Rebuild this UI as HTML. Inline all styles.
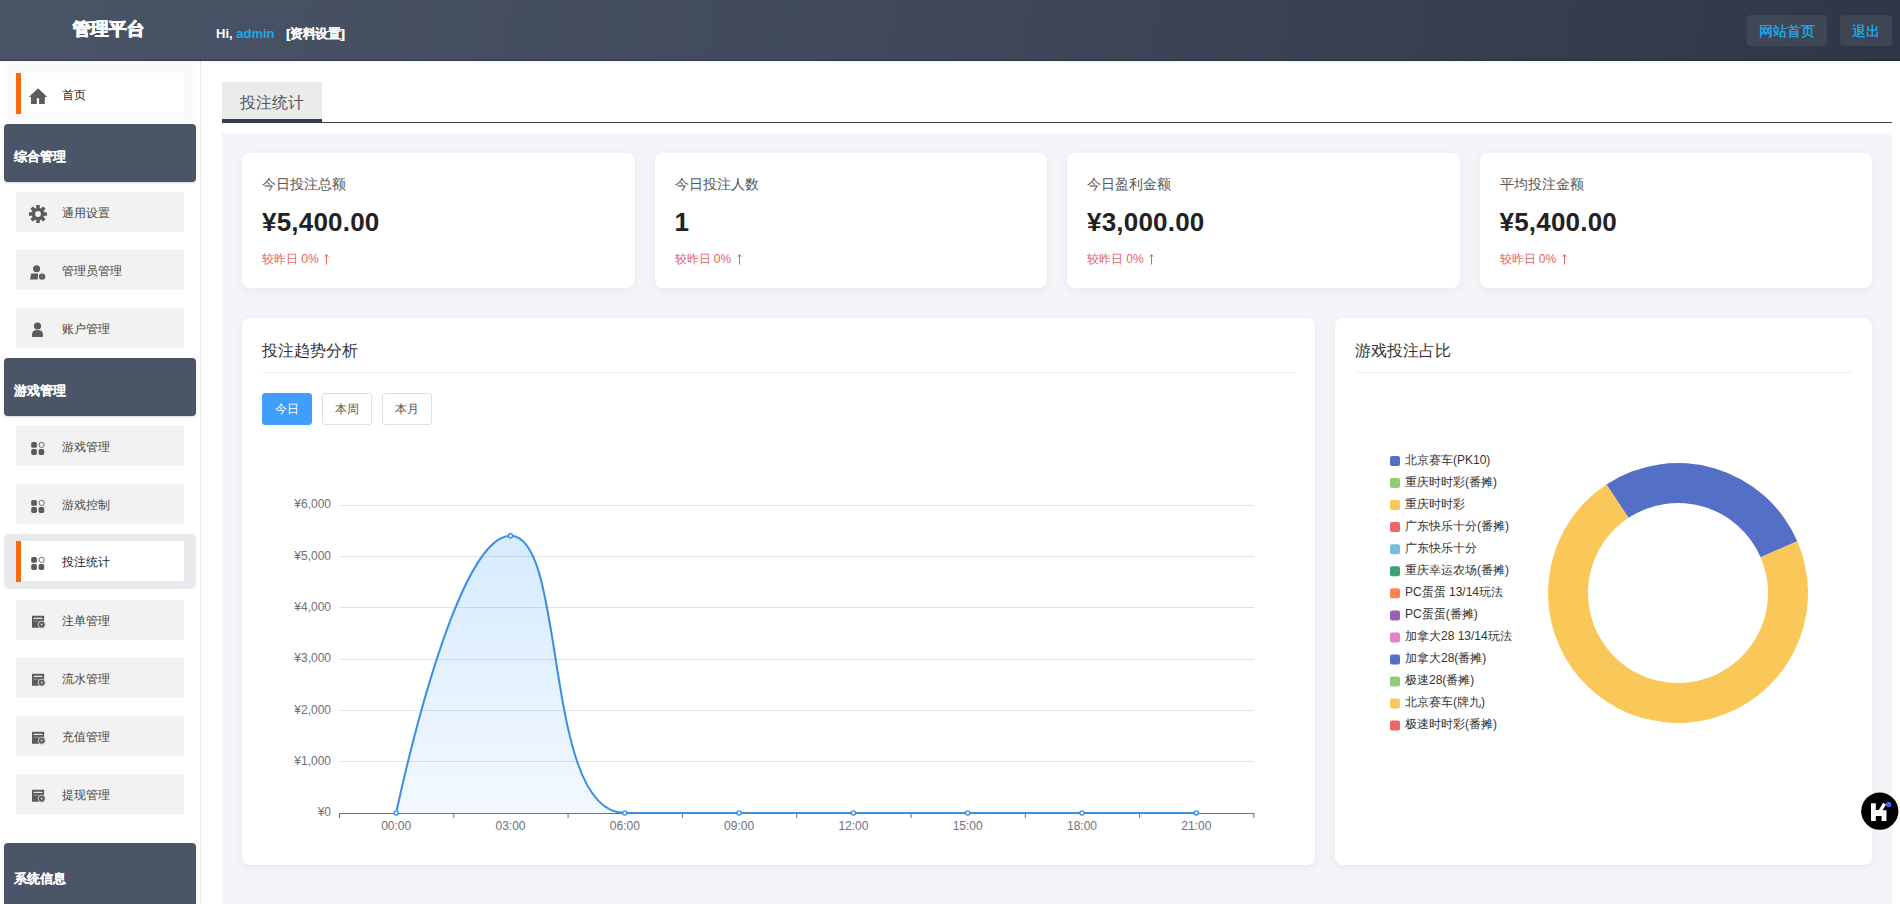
<!DOCTYPE html>
<html><head><meta charset="utf-8"><style>
*{box-sizing:border-box;margin:0;padding:0}
html,body{width:1900px;height:904px;overflow:hidden;background:#fff;font-family:"Liberation Sans",sans-serif;color:#333}
.abs{position:absolute}
.b{text-shadow:0.3px 0 0 currentColor}
#hdr{z-index:2;left:0;top:0;width:1900px;height:61px;background:linear-gradient(100deg,#4a5467 0%,#404a5c 45%,#2f3747 100%);box-shadow:inset 0 -1.5px 0 rgba(0,0,0,.18),0 1px 3px rgba(0,0,0,.07)}
#logo{z-index:3;left:72.5px;top:19px;text-shadow:0.5px 0 0 #fff,-0.2px 0 0 #fff;font-size:18px;font-weight:bold;color:#fff;line-height:20px;white-space:nowrap}
#hi{z-index:3;left:216px;top:26px;font-size:13px;font-weight:bold;color:#fff;white-space:nowrap;line-height:16px}
#hi .u{color:#1ea7ee}
.hbtn{z-index:3;top:15px;height:31px;line-height:33px;font-size:14px;color:#1ba8e8;text-shadow:0.3px 0 0 currentColor;background:rgba(255,255,255,.07);border-radius:4px;text-align:center}
#side{left:0;top:61px;width:201px;height:843px;background:#fff;border-right:1px solid #e9e9ec}
.item{position:absolute;left:16px;width:168px;height:40px;background:#f2f2f2;font-size:12px;color:#454545;line-height:16px}
.item .t{position:absolute;left:46px;top:13px;white-space:nowrap}
.item .ic{position:absolute;left:0;top:0;width:40px;height:40px;overflow:visible}
.grp{position:absolute;left:4px;width:192px;height:58px;background:#4b5568;border-radius:4px;box-shadow:0 1px 2px rgba(0,0,0,.15)}
.grp span{position:absolute;left:10px;top:25px;color:#fff;font-weight:bold;font-size:13px;line-height:16px;white-space:nowrap}
.bar{position:absolute;left:0;top:0;width:5px;height:41px;background:#f96a0a}
.card{position:absolute;background:#fff;border-radius:8px;box-shadow:0 2px 10px rgba(0,0,0,.06)}
.lbl{position:absolute;left:20px;top:23px;font-size:14px;color:#555;white-space:nowrap;line-height:16px}
.val{position:absolute;left:20px;top:56px;font-size:26px;font-weight:bold;color:#222;letter-spacing:0.2px;white-space:nowrap;line-height:26px}
.cmp{position:absolute;left:20px;top:99px;font-size:12px;color:#df6464;white-space:nowrap;line-height:14px}
.ttl{position:absolute;left:20px;top:24px;font-size:16px;color:#333;white-space:nowrap;line-height:18px}
.div{position:absolute;left:20px;top:54px;height:1px;background:#eef0f3}
.btn{position:absolute;top:75px;width:50px;height:32px;border:1px solid #dcdfe6;border-radius:3px;font-size:12px;color:#555;text-align:center;line-height:30px;background:#fff}
.btn.on{background:#409eff;border-color:#409eff;color:#fff}
svg text{font-family:"Liberation Sans",sans-serif}
</style></head><body>
<div id="hdr" class="abs"></div>
<div id="logo" class="abs">管理平台</div>
<div id="hi" class="abs">Hi, <span class="u">admin</span></div><div class="abs b" style="z-index:3;left:286px;top:26px;font-size:13px;font-weight:bold;color:#fff;line-height:16px;white-space:nowrap;letter-spacing:-0.4px">[资料设置]</div>
<div class="abs hbtn" style="left:1747px;width:80px">网站首页</div>
<div class="abs hbtn" style="left:1840px;width:52px">退出</div>
<div id="side" class="abs">
<div class="abs" style="left:4px;top:3px;width:192px;height:56px;background:#fafafa"></div>
<div class="item" style="top:12px;background:#fff;color:#222"><div class="bar"></div><svg class="ic" width="40" height="40"><path d="M22.1 15.2 L31.2 23.9 L28.8 23.9 L28.8 30.9 L23.1 30.9 L23.1 25.2 L20.8 25.2 L20.8 30.9 L15 30.9 L15 23.9 L12.9 23.9 Z" fill="#5b5b5b"/></svg><span class="t" style="top:14px">首页</span></div>
<div class="grp" style="top:63px"><span class="b">综合管理</span></div>
<div class="item" style="top:131px"><svg class="ic" width="40" height="40"><g fill="#5b5b5b" transform="translate(22,22)"><circle r="6.3"/><rect x="-1.8" y="-9" width="3.6" height="18" rx="0.5"/><rect x="-1.8" y="-9" width="3.6" height="18" rx="0.5" transform="rotate(45)"/><rect x="-1.8" y="-9" width="3.6" height="18" rx="0.5" transform="rotate(90)"/><rect x="-1.8" y="-9" width="3.6" height="18" rx="0.5" transform="rotate(135)"/></g><circle cx="22" cy="22" r="2.9" fill="#f2f2f2"/></svg><span class="t">通用设置</span></div>
<div class="item" style="top:189px"><svg class="ic" width="40" height="40"><g fill="#5b5b5b"><circle cx="20.6" cy="18.7" r="3.5"/><path d="M15.2 23.6 L22.2 23.6 L21.7 29.6 L14 29.6 Z"/><circle cx="26.1" cy="26.6" r="3.2"/></g><circle cx="26.1" cy="26.6" r="1" fill="#888"/></svg><span class="t">管理员管理</span></div>
<div class="item" style="top:247px"><svg class="ic" width="40" height="40"><g fill="#5b5b5b"><circle cx="21.5" cy="18" r="3.6"/><path d="M16.1 29 L16.1 26 Q16.1 21.9 21.5 21.9 Q26.9 21.9 26.9 26 L26.9 29 Z"/></g></svg><span class="t">账户管理</span></div>
<div class="grp" style="top:297px"><span class="b">游戏管理</span></div>
<div class="item" style="top:365px"><svg class="ic" width="40" height="40"><g fill="#5b5b5b"><rect x="15.2" y="16" width="5.7" height="5.8" rx="1.6"/><rect x="15.2" y="23.1" width="5.7" height="5.8" rx="1.6"/><rect x="22.6" y="23.1" width="5.6" height="5.8" rx="1.6"/></g><circle cx="25.6" cy="18.9" r="2.6" fill="none" stroke="#5b5b5b" stroke-width="0.9"/></svg><span class="t">游戏管理</span></div>
<div class="item" style="top:423px"><svg class="ic" width="40" height="40"><g fill="#5b5b5b"><rect x="15.2" y="16" width="5.7" height="5.8" rx="1.6"/><rect x="15.2" y="23.1" width="5.7" height="5.8" rx="1.6"/><rect x="22.6" y="23.1" width="5.6" height="5.8" rx="1.6"/></g><circle cx="25.6" cy="18.9" r="2.6" fill="none" stroke="#5b5b5b" stroke-width="0.9"/></svg><span class="t">游戏控制</span></div>
<div class="abs" style="left:4px;top:473px;width:192px;height:55px;background:#e8e9ec;border-radius:5px"></div>
<div class="item" style="top:480px;background:#fff;color:#222"><div class="bar"></div><svg class="ic" width="40" height="40"><g fill="#5b5b5b"><rect x="15.2" y="16" width="5.7" height="5.8" rx="1.6"/><rect x="15.2" y="23.1" width="5.7" height="5.8" rx="1.6"/><rect x="22.6" y="23.1" width="5.6" height="5.8" rx="1.6"/></g><circle cx="25.6" cy="18.9" r="2.6" fill="none" stroke="#5b5b5b" stroke-width="0.9"/></svg><span class="t">投注统计</span></div>
<div class="item" style="top:539px"><svg class="ic" width="40" height="40"><rect x="16" y="15.8" width="12.1" height="12" rx="0.5" fill="#5b5b5b"/><rect x="17.5" y="17.8" width="9" height="1.2" rx="0.6" fill="#e8e8e8"/><rect x="17.5" y="20.6" width="5" height="1" fill="#9a9a9a"/><circle cx="25.7" cy="24.6" r="3.6" fill="#5b5b5b" stroke="#dcdcdc" stroke-width="0.9"/><path d="M24.4 23.8 L27 23.8 L25.7 26 Z" fill="#dcdcdc"/></svg><span class="t">注单管理</span></div>
<div class="item" style="top:597px"><svg class="ic" width="40" height="40"><rect x="16" y="15.8" width="12.1" height="12" rx="0.5" fill="#5b5b5b"/><rect x="17.5" y="17.8" width="9" height="1.2" rx="0.6" fill="#e8e8e8"/><rect x="17.5" y="20.6" width="5" height="1" fill="#9a9a9a"/><circle cx="25.7" cy="24.6" r="3.6" fill="#5b5b5b" stroke="#dcdcdc" stroke-width="0.9"/><path d="M24.4 23.8 L27 23.8 L25.7 26 Z" fill="#dcdcdc"/></svg><span class="t">流水管理</span></div>
<div class="item" style="top:655px"><svg class="ic" width="40" height="40"><rect x="16" y="15.8" width="12.1" height="12" rx="0.5" fill="#5b5b5b"/><rect x="17.5" y="17.8" width="9" height="1.2" rx="0.6" fill="#e8e8e8"/><rect x="17.5" y="20.6" width="5" height="1" fill="#9a9a9a"/><circle cx="25.7" cy="24.6" r="3.6" fill="#5b5b5b" stroke="#dcdcdc" stroke-width="0.9"/><path d="M24.4 23.8 L27 23.8 L25.7 26 Z" fill="#dcdcdc"/></svg><span class="t">充值管理</span></div>
<div class="item" style="top:713px"><svg class="ic" width="40" height="40"><rect x="16" y="15.8" width="12.1" height="12" rx="0.5" fill="#5b5b5b"/><rect x="17.5" y="17.8" width="9" height="1.2" rx="0.6" fill="#e8e8e8"/><rect x="17.5" y="20.6" width="5" height="1" fill="#9a9a9a"/><circle cx="25.7" cy="24.6" r="3.6" fill="#5b5b5b" stroke="#dcdcdc" stroke-width="0.9"/><path d="M24.4 23.8 L27 23.8 L25.7 26 Z" fill="#dcdcdc"/></svg><span class="t">提现管理</span></div>
<div class="grp" style="top:782px;height:70px"><span class="b" style="top:28px">系统信息</span></div>
</div>
<div class="abs" style="left:222px;top:82px;width:100px;height:37px;background:#ebebeb"></div>
<div class="abs" style="left:240px;top:94px;font-size:16px;color:#555;line-height:18px">投注统计</div>
<div class="abs" style="left:222px;top:122px;width:1670px;height:1px;background:#3a3f4c"></div>
<div class="abs" style="left:222px;top:119px;width:100px;height:4px;background:#363c50"></div>
<div class="abs" style="left:222px;top:133px;width:1670px;height:771px;background:#f4f5f8"></div>
<div class="card" style="left:242.0px;top:153px;width:392.5px;height:135px"><div class="lbl">今日投注总额</div><div class="val">¥5,400.00</div><div class="cmp">较昨日 0% <svg style="position:absolute;left:61px;top:2px" width="7" height="11"><path d="M3.5 0.5 L3.5 10.5 M1.6 2.8 L3.5 0.7 L5.4 2.8" stroke="#df6464" stroke-width="1" fill="none"/></svg></div></div>
<div class="card" style="left:654.5px;top:153px;width:392.5px;height:135px"><div class="lbl">今日投注人数</div><div class="val">1</div><div class="cmp">较昨日 0% <svg style="position:absolute;left:61px;top:2px" width="7" height="11"><path d="M3.5 0.5 L3.5 10.5 M1.6 2.8 L3.5 0.7 L5.4 2.8" stroke="#df6464" stroke-width="1" fill="none"/></svg></div></div>
<div class="card" style="left:1067.0px;top:153px;width:392.5px;height:135px"><div class="lbl">今日盈利金额</div><div class="val">¥3,000.00</div><div class="cmp">较昨日 0% <svg style="position:absolute;left:61px;top:2px" width="7" height="11"><path d="M3.5 0.5 L3.5 10.5 M1.6 2.8 L3.5 0.7 L5.4 2.8" stroke="#df6464" stroke-width="1" fill="none"/></svg></div></div>
<div class="card" style="left:1479.5px;top:153px;width:392.5px;height:135px"><div class="lbl">平均投注金额</div><div class="val">¥5,400.00</div><div class="cmp">较昨日 0% <svg style="position:absolute;left:61px;top:2px" width="7" height="11"><path d="M3.5 0.5 L3.5 10.5 M1.6 2.8 L3.5 0.7 L5.4 2.8" stroke="#df6464" stroke-width="1" fill="none"/></svg></div></div>
<div class="card" style="left:242px;top:318px;width:1073.33px;height:547px"><div class="ttl">投注趋势分析</div><div class="div" style="width:1033px"></div><div class="btn on" style="left:20px">今日</div><div class="btn" style="left:80px">本周</div><div class="btn" style="left:140px">本月</div></div>
<div class="card" style="left:1335.33px;top:318px;width:536.67px;height:547px"><div class="ttl">游戏投注占比</div><div class="div" style="width:497px"></div></div>
<svg class="abs" style="left:0;top:0" width="1900" height="904" viewBox="0 0 1900 904">
<defs><linearGradient id="ag" x1="0" y1="0" x2="0" y2="1"><stop offset="0" stop-color="#409eff" stop-opacity="0.21"/><stop offset="1" stop-color="#409eff" stop-opacity="0.07"/></linearGradient></defs>
<text x="331" y="816.2" font-size="12" fill="#6e7079" text-anchor="end">¥0</text>
<line x1="339.5" y1="761.5" x2="1254" y2="761.5" stroke="#e2e2e6" stroke-width="1"/>
<text x="331" y="764.9" font-size="12" fill="#6e7079" text-anchor="end">¥1,000</text>
<line x1="339.5" y1="710.5" x2="1254" y2="710.5" stroke="#e2e2e6" stroke-width="1"/>
<text x="331" y="713.5" font-size="12" fill="#6e7079" text-anchor="end">¥2,000</text>
<line x1="339.5" y1="659.5" x2="1254" y2="659.5" stroke="#e2e2e6" stroke-width="1"/>
<text x="331" y="662.2" font-size="12" fill="#6e7079" text-anchor="end">¥3,000</text>
<line x1="339.5" y1="607.5" x2="1254" y2="607.5" stroke="#e2e2e6" stroke-width="1"/>
<text x="331" y="610.9" font-size="12" fill="#6e7079" text-anchor="end">¥4,000</text>
<line x1="339.5" y1="556.5" x2="1254" y2="556.5" stroke="#e2e2e6" stroke-width="1"/>
<text x="331" y="559.5" font-size="12" fill="#6e7079" text-anchor="end">¥5,000</text>
<line x1="339.5" y1="505.5" x2="1254" y2="505.5" stroke="#e2e2e6" stroke-width="1"/>
<text x="331" y="508.2" font-size="12" fill="#6e7079" text-anchor="end">¥6,000</text>
<path d="M396.20,813.00 C396.20,813.00 453.35,535.80 510.50,535.80 C567.65,535.80 542.05,813.00 624.80,813.00 C656.35,813.00 681.95,813.00 739.10,813.00 C796.25,813.00 796.25,813.00 853.40,813.00 C910.55,813.00 910.55,813.00 967.70,813.00 C1024.85,813.00 1024.85,813.00 1082.00,813.00 C1139.15,813.00 1196.30,813.00 1196.30,813.00 L1196.3,813.0 L396.2,813.0 Z" fill="url(#ag)"/>
<line x1="339.5" y1="813.5" x2="1254" y2="813.5" stroke="#6e7079" stroke-width="1"/>
<line x1="339.5" y1="813" x2="339.5" y2="818" stroke="#6e7079" stroke-width="1"/>
<line x1="453.8" y1="813" x2="453.8" y2="818" stroke="#6e7079" stroke-width="1"/>
<line x1="568.1" y1="813" x2="568.1" y2="818" stroke="#6e7079" stroke-width="1"/>
<line x1="682.4" y1="813" x2="682.4" y2="818" stroke="#6e7079" stroke-width="1"/>
<line x1="796.7" y1="813" x2="796.7" y2="818" stroke="#6e7079" stroke-width="1"/>
<line x1="911.0" y1="813" x2="911.0" y2="818" stroke="#6e7079" stroke-width="1"/>
<line x1="1025.3" y1="813" x2="1025.3" y2="818" stroke="#6e7079" stroke-width="1"/>
<line x1="1139.6" y1="813" x2="1139.6" y2="818" stroke="#6e7079" stroke-width="1"/>
<line x1="1253.9" y1="813" x2="1253.9" y2="818" stroke="#6e7079" stroke-width="1"/>
<text x="396.2" y="830" font-size="12" fill="#6e7079" text-anchor="middle">00:00</text>
<text x="510.5" y="830" font-size="12" fill="#6e7079" text-anchor="middle">03:00</text>
<text x="624.8" y="830" font-size="12" fill="#6e7079" text-anchor="middle">06:00</text>
<text x="739.1" y="830" font-size="12" fill="#6e7079" text-anchor="middle">09:00</text>
<text x="853.4" y="830" font-size="12" fill="#6e7079" text-anchor="middle">12:00</text>
<text x="967.7" y="830" font-size="12" fill="#6e7079" text-anchor="middle">15:00</text>
<text x="1082.0" y="830" font-size="12" fill="#6e7079" text-anchor="middle">18:00</text>
<text x="1196.3" y="830" font-size="12" fill="#6e7079" text-anchor="middle">21:00</text>
<path d="M396.20,813.00 C396.20,813.00 453.35,535.80 510.50,535.80 C567.65,535.80 542.05,813.00 624.80,813.00 C656.35,813.00 681.95,813.00 739.10,813.00 C796.25,813.00 796.25,813.00 853.40,813.00 C910.55,813.00 910.55,813.00 967.70,813.00 C1024.85,813.00 1024.85,813.00 1082.00,813.00 C1139.15,813.00 1196.30,813.00 1196.30,813.00" fill="none" stroke="#3a8ee6" stroke-width="2"/>
<circle cx="396.2" cy="813.0" r="2.1" fill="#fff" stroke="#3a8ee6" stroke-width="1.4"/>
<circle cx="510.5" cy="535.8" r="2.1" fill="#fff" stroke="#3a8ee6" stroke-width="1.4"/>
<circle cx="624.8" cy="813.0" r="2.1" fill="#fff" stroke="#3a8ee6" stroke-width="1.4"/>
<circle cx="739.1" cy="813.0" r="2.1" fill="#fff" stroke="#3a8ee6" stroke-width="1.4"/>
<circle cx="853.4" cy="813.0" r="2.1" fill="#fff" stroke="#3a8ee6" stroke-width="1.4"/>
<circle cx="967.7" cy="813.0" r="2.1" fill="#fff" stroke="#3a8ee6" stroke-width="1.4"/>
<circle cx="1082.0" cy="813.0" r="2.1" fill="#fff" stroke="#3a8ee6" stroke-width="1.4"/>
<circle cx="1196.3" cy="813.0" r="2.1" fill="#fff" stroke="#3a8ee6" stroke-width="1.4"/>
<path d="M1606.44,484.47 A130,130 0 0 1 1797.31,541.37 L1760.60,557.26 A90,90 0 0 0 1628.46,517.86 Z" fill="#5470c6"/>
<path d="M1797.31,541.37 A130,130 0 1 1 1606.44,484.47 L1628.46,517.86 A90,90 0 1 0 1760.60,557.26 Z" fill="#fac858"/>
<rect x="1390" y="456.0" width="10" height="10" rx="2" fill="#5470c6"/>
<text x="1405" y="463.7" font-size="12" fill="#333">北京赛车(PK10)</text>
<rect x="1390" y="478.1" width="10" height="10" rx="2" fill="#91cc75"/>
<text x="1405" y="485.8" font-size="12" fill="#333">重庆时时彩(番摊)</text>
<rect x="1390" y="500.1" width="10" height="10" rx="2" fill="#fac858"/>
<text x="1405" y="507.8" font-size="12" fill="#333">重庆时时彩</text>
<rect x="1390" y="522.1" width="10" height="10" rx="2" fill="#ee6666"/>
<text x="1405" y="529.9" font-size="12" fill="#333">广东快乐十分(番摊)</text>
<rect x="1390" y="544.2" width="10" height="10" rx="2" fill="#73c0de"/>
<text x="1405" y="551.9" font-size="12" fill="#333">广东快乐十分</text>
<rect x="1390" y="566.2" width="10" height="10" rx="2" fill="#3ba272"/>
<text x="1405" y="574.0" font-size="12" fill="#333">重庆幸运农场(番摊)</text>
<rect x="1390" y="588.3" width="10" height="10" rx="2" fill="#fc8452"/>
<text x="1405" y="596.0" font-size="12" fill="#333">PC蛋蛋 13/14玩法</text>
<rect x="1390" y="610.4" width="10" height="10" rx="2" fill="#9a60b4"/>
<text x="1405" y="618.1" font-size="12" fill="#333">PC蛋蛋(番摊)</text>
<rect x="1390" y="632.4" width="10" height="10" rx="2" fill="#ea7ccc"/>
<text x="1405" y="640.1" font-size="12" fill="#333">加拿大28 13/14玩法</text>
<rect x="1390" y="654.5" width="10" height="10" rx="2" fill="#5470c6"/>
<text x="1405" y="662.2" font-size="12" fill="#333">加拿大28(番摊)</text>
<rect x="1390" y="676.5" width="10" height="10" rx="2" fill="#91cc75"/>
<text x="1405" y="684.2" font-size="12" fill="#333">极速28(番摊)</text>
<rect x="1390" y="698.5" width="10" height="10" rx="2" fill="#fac858"/>
<text x="1405" y="706.2" font-size="12" fill="#333">北京赛车(牌九)</text>
<rect x="1390" y="720.6" width="10" height="10" rx="2" fill="#ee6666"/>
<text x="1405" y="728.3" font-size="12" fill="#333">极速时时彩(番摊)</text>
</svg>
<svg class="abs" style="left:1858px;top:789px" width="42" height="44"><circle cx="21.8" cy="22.2" r="18.6" fill="#000"/><path d="M13 14.3 L17.8 14.3 L17.8 20.9 L23.6 20.9 L23.6 21.3 L28.5 21.3 L28.5 32 L23.6 32 L23.6 26.9 L17.8 26.9 L17.8 32 L13 32 Z" fill="#fff"/><path d="M21.8 22.6 L26.6 14.6" stroke="#fff" stroke-width="3.4"/><circle cx="30.7" cy="15.5" r="2.7" fill="#4a63e8"/></svg>
</body></html>
